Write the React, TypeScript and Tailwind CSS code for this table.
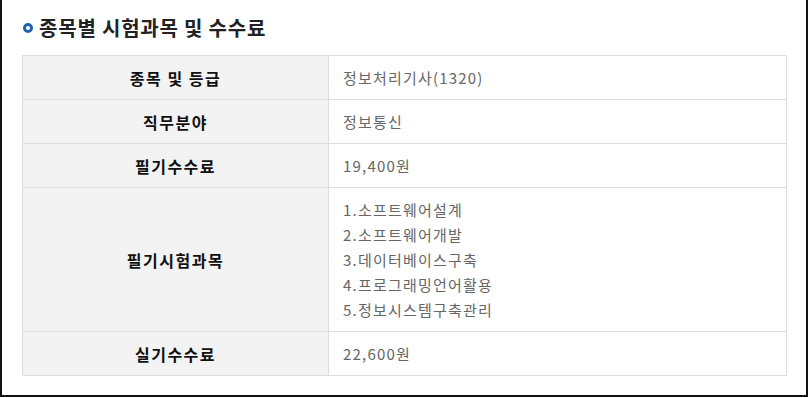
import React from "react";

const rows: { label: string; value: string[] }[] = [
  { label: "종목 및 등급", value: ["정보처리기사(1320)"] },
  { label: "직무분야", value: ["정보통신"] },
  { label: "필기수수료", value: ["19,400원"] },
  {
    label: "필기시험과목",
    value: [
      "1.소프트웨어설계",
      "2.소프트웨어개발",
      "3.데이터베이스구축",
      "4.프로그래밍언어활용",
      "5.정보시스템구축관리",
    ],
  },
  { label: "실기수수료", value: ["22,600원"] },
];

const App: React.FC = () => {
  return (
    <div
      className="w-[810px] h-[398px] bg-white"
      style={{ fontFamily: '"Noto Sans CJK KR", "Noto Sans", sans-serif' }}
    >
      <div className="w-[808px] h-[397px] border-l-2 border-r-2 border-b-2 border-[#111] px-5 pt-[15px]">
        {/* Title */}
        <div className="flex items-center h-[26px] mb-[14px]">
          <span className="w-[10px] h-[10px] rounded-full border-[3px] border-[#1f64b0] bg-white mr-[6px] ml-px" />
          <h2 className="text-[20px] font-bold text-[#222] tracking-[0.8px] leading-none">
            종목별 시험과목 및 수수료
          </h2>
        </div>

        {/* Table */}
        <table className="w-[765px] border-collapse border border-[#dddddd]">
          <tbody>
            {rows.map((row) => (
              <tr key={row.label}>
                <th className="w-[306px] bg-[#f3f3f3] border border-[#dddddd] text-[16px] font-bold text-[#111] tracking-[1.5px] text-center align-middle">
                  {row.label}
                </th>
                <td
                  className={`border border-[#dddddd] pl-[14px] text-[15px] text-[#666] tracking-[1.2px] align-middle ${
                    row.value.length > 1 ? "py-[9px]" : "h-[44px]"
                  }`}
                >
                  {row.value.map((v) => (
                    <div key={v} className="leading-[25px]">
                      {v}
                    </div>
                  ))}
                </td>
              </tr>
            ))}
          </tbody>
        </table>
      </div>
    </div>
  );
};

export default App;
